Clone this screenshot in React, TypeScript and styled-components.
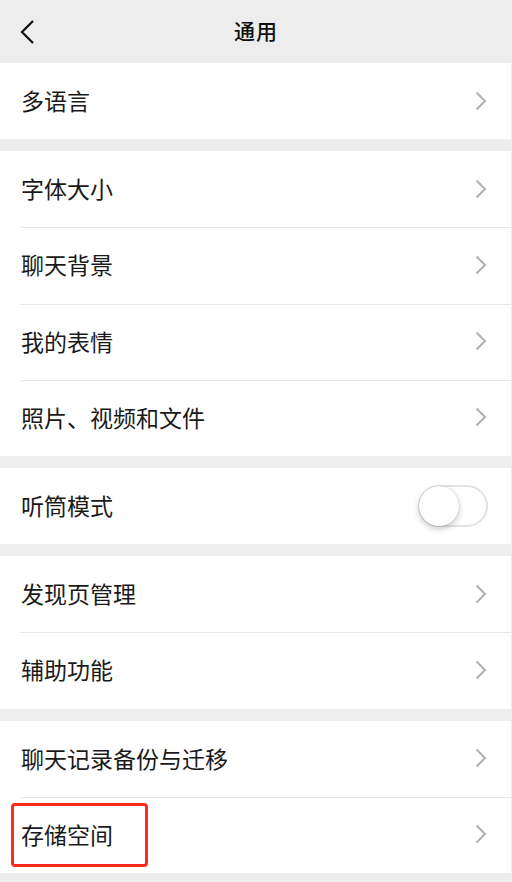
import React, { useState } from 'react'
import styled, { createGlobalStyle } from 'styled-components'

const GlobalStyle = createGlobalStyle`
  html, body {
    margin: 0;
    padding: 0;
    background: #ededed;
    font-family: "Noto Sans CJK SC", "Noto Sans", sans-serif;
  }
`

const Page = styled.div`
  width: 512px;
  min-height: 882px;
  background: #ededed;
  display: flex;
  flex-direction: column;
  gap: 12px;
`

const Header = styled.div`
  height: 63px;
  box-sizing: border-box;
  padding-bottom: 3px;
  display: flex;
  align-items: center;
  justify-content: center;
  position: relative;
  margin-bottom: -12px;
`

const BackButton = styled.div`
  position: absolute;
  left: 19px;
  top: 19px;
  width: 18px;
  height: 26px;
  display: flex;
`

const Title = styled.h1`
  margin: 0;
  font-size: 21px;
  font-weight: 500;
  color: #111;
  letter-spacing: 1px;
`

const Group = styled.div`
  background: #fff;
  margin-right: 1px;
  display: flex;
  flex-direction: column;
`

const Row = styled.div<{ $first?: boolean }>`
  height: 76.2px;
  box-sizing: border-box;
  display: flex;
  align-items: center;
  padding: 0 24px 1px 21px;
  position: relative;
  &::before {
    content: "";
    display: ${p => (p.$first ? 'none' : 'block')};
    position: absolute;
    left: 20px;
    right: 0;
    top: 0;
    height: 1px;
    background: #e6e6e6;
  }
`

const Label = styled.span`
  flex: 1;
  font-size: 23px;
  color: #1a1a1a;
  line-height: 1;
`

const Switch = styled.div<{ $on: boolean }>`
  width: 70px;
  height: 42px;
  box-sizing: border-box;
  border: 2px solid #e2e2e2;
  border-radius: 21px;
  background: ${p => (p.$on ? '#07c160' : '#fff')};
  position: relative;
  margin-right: -1px;
  cursor: pointer;
`

const Knob = styled.div<{ $on: boolean }>`
  position: absolute;
  top: -1px;
  left: ${p => (p.$on ? '29px' : '-1px')};
  width: 40px;
  height: 40px;
  border-radius: 50%;
  background: #fff;
  box-shadow: 0 3px 6px rgba(0, 0, 0, 0.22), 0 0 1px rgba(0, 0, 0, 0.25);
`

const Highlight = styled.div`
  position: absolute;
  left: 11px;
  top: 6px;
  width: 137px;
  height: 64px;
  box-sizing: border-box;
  border: 3px solid #ff2a1e;
  border-radius: 4px;
  pointer-events: none;
`

const Chevron = () => (
  <svg width="12" height="20" viewBox="0 0 12 20">
    <path d="M1.5 1.5 L10 10 L1.5 18.5" fill="none" stroke="#b0b0b0" strokeWidth="2" />
  </svg>
)

const BackIcon = () => (
  <svg width="18" height="26" viewBox="0 0 18 26">
    <path d="M14 2 L3 13 L14 24" fill="none" stroke="#111" strokeWidth="2.3" />
  </svg>
)

type Item = { label: string; toggle?: boolean; mark?: boolean }

const groups: Item[][] = [
  [{ label: '多语言' }],
  [{ label: '字体大小' }, { label: '聊天背景' }, { label: '我的表情' }, { label: '照片、视频和文件' }],
  [{ label: '听筒模式', toggle: true }],
  [{ label: '发现页管理' }, { label: '辅助功能' }],
  [{ label: '聊天记录备份与迁移' }, { label: '存储空间', mark: true }],
]

export default function App() {
  const [earpiece, setEarpiece] = useState(false)

  return (
    <Page>
      <GlobalStyle />
      <Header>
        <BackButton>
          <BackIcon />
        </BackButton>
        <Title>通用</Title>
      </Header>
      {groups.map((g, gi) => (
        <Group key={gi}>
          {g.map((item, i) => (
            <Row key={item.label} $first={i === 0}>
              <Label>{item.label}</Label>
              {item.toggle ? (
                <Switch $on={earpiece} onClick={() => setEarpiece(!earpiece)}>
                  <Knob $on={earpiece} />
                </Switch>
              ) : (
                <Chevron />
              )}
              {item.mark && <Highlight />}
            </Row>
          ))}
        </Group>
      ))}
    </Page>
  )
}
